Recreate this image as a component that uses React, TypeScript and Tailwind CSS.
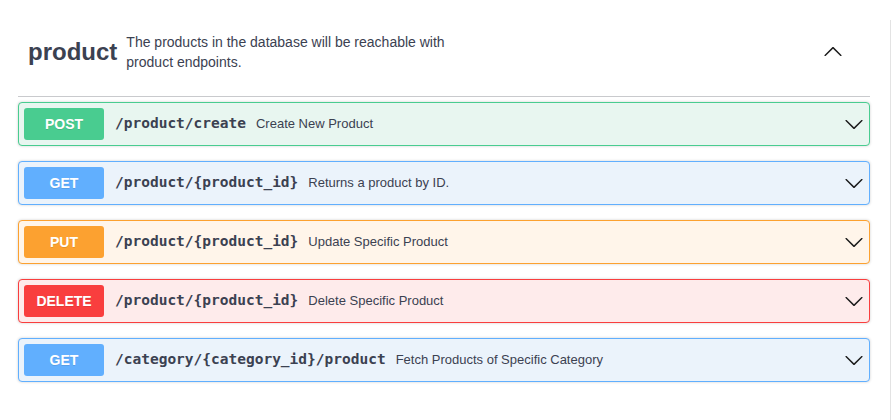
import React from "react";

type Op = {
  method: string;
  path: string;
  summary: string;
  border: string;
  bg: string;
  badge: string;
};

const ops: Op[] = [
  { method: "POST", path: "/product/create", summary: "Create New Product", border: "border-[#49cc90]", bg: "bg-[#e8f6f0]", badge: "bg-[#49cc90]" },
  { method: "GET", path: "/product/{product_id}", summary: "Returns a product by ID.", border: "border-[#61affe]", bg: "bg-[#ebf3fb]", badge: "bg-[#61affe]" },
  { method: "PUT", path: "/product/{product_id}", summary: "Update Specific Product", border: "border-[#fca130]", bg: "bg-[#fff5ea]", badge: "bg-[#fca130]" },
  { method: "DELETE", path: "/product/{product_id}", summary: "Delete Specific Product", border: "border-[#f93e3e]", bg: "bg-[#feebeb]", badge: "bg-[#f93e3e]" },
  { method: "GET", path: "/category/{category_id}/product", summary: "Fetch Products of Specific Category", border: "border-[#61affe]", bg: "bg-[#ebf3fb]", badge: "bg-[#61affe]" },
];

// swagger-ui arrow
function Arrow({ up = false }: { up?: boolean }) {
  return (
    <svg width="20" height="20" viewBox="0 0 20 20" className={up ? "rotate-180" : ""}>
      <path
        fill="#1b1b1b"
        d="M17.418 6.109c.272-.268.709-.268.979 0s.271.701 0 .969l-7.908 7.83c-.27.268-.707.268-.979 0l-7.908-7.83c-.27-.268-.27-.701 0-.969.271-.268.709-.268.979 0L10 13.25l7.418-7.141z"
      />
    </svg>
  );
}

function OpRow({ op }: { op: Op }) {
  return (
    <div className={`flex items-center rounded-[4px] border ${op.border} ${op.bg} p-[5px] shadow-[0_0_3px_rgba(0,0,0,0.19)] mb-[15px]`}>
      <div
        className={`${op.badge} w-[80px] h-[32px] rounded-[3px] flex items-center justify-center text-white text-[14px] font-bold [text-shadow:0_1px_0_rgba(0,0,0,0.1)]`}
        style={{ fontFamily: '"Liberation Sans", Arial, sans-serif' }}
      >
        {op.method}
      </div>
      <span
        className="ml-[11px] text-[14.5px] font-bold text-[#3b4151]"
        style={{ fontFamily: '"DejaVu Sans Mono", monospace' }}
      >
        {op.path}
      </span>
      <span
        className="ml-[10px] text-[13px] text-[#3b4151]"
        style={{ fontFamily: '"Liberation Sans", Arial, sans-serif' }}
      >
        {op.summary}
      </span>
      <div className="ml-auto mr-[0px] flex items-center">
        <Arrow />
      </div>
    </div>
  );
}

export default function App() {
  return (
    <div className="w-[891px] h-[420px] bg-white flex overflow-hidden" style={{ fontFamily: '"Liberation Sans", Arial, sans-serif' }}>
      <div className="flex-1 pl-[18px] pr-[20px]">
        {/* Tag header */}
        <div className="h-[97px] pt-[8px] flex items-center border-b border-[#c9cacd]">
          <h3 className="pl-[10px] text-[24px] font-bold text-[#3b4151] leading-none">product</h3>
          <p className="ml-[9px] w-[330px] text-[14px] leading-[20px] text-[#3b4151]">
            The products in the database will be reachable with product endpoints.
          </p>
          <div className="ml-auto mr-[27px] flex items-center">
            <Arrow up />
          </div>
        </div>

        {/* Operations */}
        <div className="pt-[5px]">
          {ops.map((op, i) => (
            <OpRow key={i} op={op} />
          ))}
        </div>
      </div>
      <div className="w-px mt-[20px] bg-[#e3e3e3]" />
    </div>
  );
}
